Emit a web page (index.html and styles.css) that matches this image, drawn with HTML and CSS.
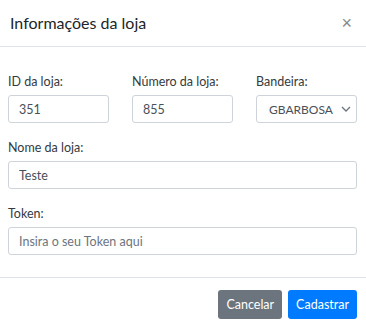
FILE: index.html
```html
<!DOCTYPE html>
<html lang="pt-BR">
<head>
  <meta charset="UTF-8" />
  <meta name="viewport" content="width=device-width, initial-scale=1.0"/>
  <title>Informações da loja</title>
  <link rel="stylesheet" href="styles.css">
</head>
<body>

  <div class="modal-content">
    <div class="modal-header">
      <h5 class="modal-title">Informações da loja</h5>
      <button type="button" class="close" aria-label="Fechar">&times;</button>
    </div>

    <div class="modal-body">
      <div class="form-row">
        <div class="form-group">
          <label for="lojaId">ID da loja:</label>
          <input type="text" id="lojaId" class="form-control" value="351" />
        </div>
        <div class="form-group">
          <label for="lojaNumero">Número da loja:</label>
          <input type="text" id="lojaNumero" class="form-control" value="855" />
        </div>
        <div class="form-group">
          <label for="bandeira">Bandeira:</label>
          <div class="select-wrap">
            <select id="bandeira" class="form-control">
              <option>GBARBOSA</option>
            </select>
            <svg class="chevron" width="10" height="6" viewBox="0 0 10 6">
              <path d="M1 1 L5 5 L9 1" fill="none" stroke="#6c757d" stroke-width="1.3"/>
            </svg>
          </div>
        </div>
      </div>

      <div class="form-group">
        <label for="lojaNome">Nome da loja:</label>
        <input type="text" id="lojaNome" class="form-control" value="Teste" />
      </div>

      <div class="form-group">
        <label for="token">Token:</label>
        <input type="text" id="token" class="form-control" placeholder="Insira o seu Token aqui" />
      </div>
    </div>

    <div class="modal-footer">
      <button type="button" class="btn btn-secondary">Cancelar</button>
      <button type="button" class="btn btn-primary">Cadastrar</button>
    </div>
  </div>

</body>
</html>
```

FILE: styles.css
```css
:root {
  --primary: #007bff;
  --secondary: #6c757d;
  --border: #ced4da;
  --divider: #dee2e6;
  --text: #212529;
  --label: #343a40;
  --input-text: #495057;
  --font: Lato, "Open Sans", "Liberation Sans", sans-serif;
}

* {
  box-sizing: border-box;
}

body {
  margin: 0;
  font-family: var(--font);
  color: var(--text);
  background: #fff;
}

.modal-content {
  width: 366px;
  height: 330px;
}

.modal-header {
  display: flex;
  justify-content: space-between;
  align-items: center;
  height: 47px;
  padding: 0 10px 0 10px;
  border-bottom: 1px solid var(--divider);
}

.modal-title {
  margin: 0;
  font-size: 16px;
  font-weight: 400;
  line-height: 24px;
}

.close {
  border: none;
  background: none;
  padding: 0 4px;
  font-family: "Liberation Sans", sans-serif;
  font-size: 18px;
  line-height: 1;
  color: #888;
  cursor: pointer;
}

.modal-body {
  padding: 26px 9px 22px 8px;
}

.form-row {
  display: grid;
  grid-template-columns: 1fr 1fr 1fr;
  gap: 23px;
}

.form-group {
  margin-bottom: 16px;
}

.modal-body > .form-group:last-child {
  margin-bottom: 0;
}

label {
  display: block;
  font-size: 12.5px;
  line-height: 18px;
  margin-bottom: 4px;
  color: var(--label);
}

.form-control {
  display: block;
  width: 100%;
  height: 28px;
  padding: 0 10px;
  font-family: var(--font);
  font-size: 12.5px;
  color: var(--input-text);
  background: #fff;
  border: 1px solid var(--border);
  border-radius: 3px;
  outline: none;
}

.form-control::placeholder {
  color: #6c757d;
  opacity: 1;
}

.select-wrap {
  position: relative;
}

select.form-control {
  appearance: none;
  -webkit-appearance: none;
  padding: 0 18px 0 12px;
  font-size: 12px;
}

.chevron {
  position: absolute;
  right: 6px;
  top: 11px;
  pointer-events: none;
}

.modal-footer {
  display: flex;
  justify-content: flex-end;
  gap: 6px;
  padding: 12px 9px 0 0;
  border-top: 1px solid var(--divider);
}

.btn {
  height: 29px;
  padding: 0 8px;
  font-family: var(--font);
  font-size: 12.5px;
  color: #fff;
  border: none;
  border-radius: 3px;
  cursor: pointer;
}

.btn-secondary {
  background-color: var(--secondary);
}

.btn-primary {
  background-color: var(--primary);
}
```
